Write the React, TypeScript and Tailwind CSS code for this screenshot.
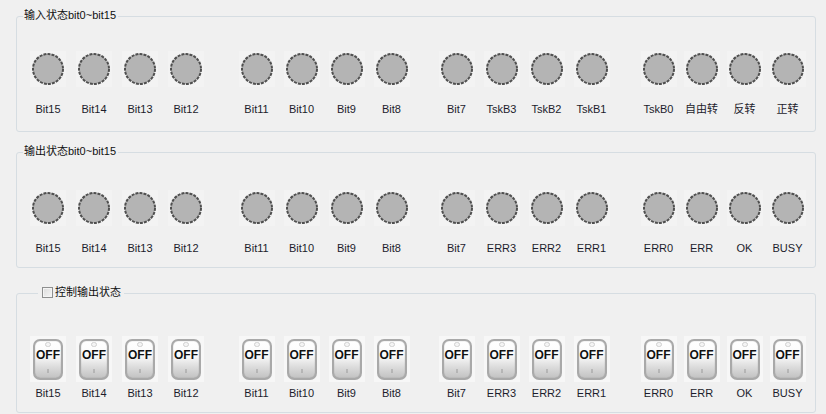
import React from "react";

const FONT = { fontFamily: '"Liberation Sans", Arial, "Noto Sans CJK SC", sans-serif' };

const row1 = [
  ["Bit15", "Bit14", "Bit13", "Bit12"],
  ["Bit11", "Bit10", "Bit9", "Bit8"],
  ["Bit7", "TskB3", "TskB2", "TskB1"],
  ["TskB0", "自由转", "反转", "正转"],
];
const row2 = [
  ["Bit15", "Bit14", "Bit13", "Bit12"],
  ["Bit11", "Bit10", "Bit9", "Bit8"],
  ["Bit7", "ERR3", "ERR2", "ERR1"],
  ["ERR0", "ERR", "OK", "BUSY"],
];

const groupCls = ["ml-[8px]", "ml-[25px]", "ml-[20px]", "ml-[23px]"];
const itemW = ["w-[46px]", "w-[45px]", "w-[45px]", "w-[43px]"];

function Lamp() {
  return (
    <div className="w-[36px] h-[36px] bg-[#f3f3f3] flex items-center justify-center">
      <svg width="34" height="34" viewBox="0 0 34 34">
        <circle cx="17" cy="17" r="15" fill="#b4b4b4" stroke="#4f4f4f" strokeWidth="2" strokeDasharray="3 1.1" />
      </svg>
    </div>
  );
}

function Toggle() {
  return (
    <div className="w-[36px] h-[46px] bg-[#f7f7f7] flex items-center justify-center">
      <div className="relative w-[30px] h-[41px] rounded-[7px] border-2 border-[#a9a9a9] bg-[linear-gradient(to_bottom,#ffffff_0%,#fafafa_40%,#dcdcdc_70%,#c2c2c2_100%)] shadow-[inset_0_0_1px_#888]">
        <div className="absolute left-1/2 -translate-x-1/2 top-[1px] w-[6px] h-[5px] rounded-full border border-[#d0d0d0] bg-[#f4f4f4]" />
        <div className="absolute left-0 right-0 top-[7px] text-center text-[12px] leading-[14px] font-bold text-[#111]">OFF</div>
        <div className="absolute left-1/2 -translate-x-1/2 bottom-[5px] w-[1px] h-[4px] bg-[#9a9a9a]" />
      </div>
    </div>
  );
}

function Row({ labels, kind }: { labels: string[][]; kind: "lamp" | "toggle" }) {
  return (
    <div className="flex">
      {labels.map((g, gi) => (
        <div key={gi} className={`flex ${groupCls[gi]}`}>
          {g.map((l, i) => (
            <div key={i} className={`${itemW[gi]} flex flex-col items-center`}>
              {kind === "lamp" ? <Lamp /> : <Toggle />}
              <div
                className={`${kind === "lamp" ? "mt-[16px]" : "mt-[5px]"} text-[11px] leading-[13px] text-[#1c1c2c] whitespace-nowrap`}
              >
                {l}
              </div>
            </div>
          ))}
        </div>
      ))}
    </div>
  );
}

export default function App() {
  return (
    <div className="w-[826px] h-[414px] bg-[#f0f0f0] overflow-hidden pl-[16px] pt-[16px]" style={FONT}>
      <div className="relative w-[800px] h-[116px] border border-[#d6dde2] rounded-[3px] pt-[34px]">
        <div className="absolute left-[6px] top-[-8px] bg-[#f0f0f0] pl-[1px] pr-[2px] text-[11px] leading-[13px] text-[#111]">
          输入状态bit0~bit15
        </div>
        <Row labels={row1} kind="lamp" />
      </div>
      <div className="relative mt-[20px] w-[800px] h-[116px] border border-[#d6dde2] rounded-[3px] pt-[37px]">
        <div className="absolute left-[6px] top-[-8px] bg-[#f0f0f0] pl-[1px] pr-[2px] text-[11px] leading-[13px] text-[#111]">
          输出状态bit0~bit15
        </div>
        <Row labels={row2} kind="lamp" />
      </div>
      <div className="relative mt-[25px] w-[800px] h-[120px] border border-[#d6dde2] rounded-[3px] pt-[42px]">
        <div className="absolute left-[21px] top-[-8px] bg-[#f0f0f0] pl-[4px] pr-[3px] flex items-center gap-[2px] text-[11px] leading-[13px] text-[#111]">
          <div className="w-[11px] h-[11px] border border-[#8e8f8f] bg-[linear-gradient(135deg,#dcdcdc,#f6f6f6)] shadow-[inset_0_0_0_1px_#f4f4f4]" />
          <span>控制输出状态</span>
        </div>
        <Row labels={row2} kind="toggle" />
      </div>
    </div>
  );
}
